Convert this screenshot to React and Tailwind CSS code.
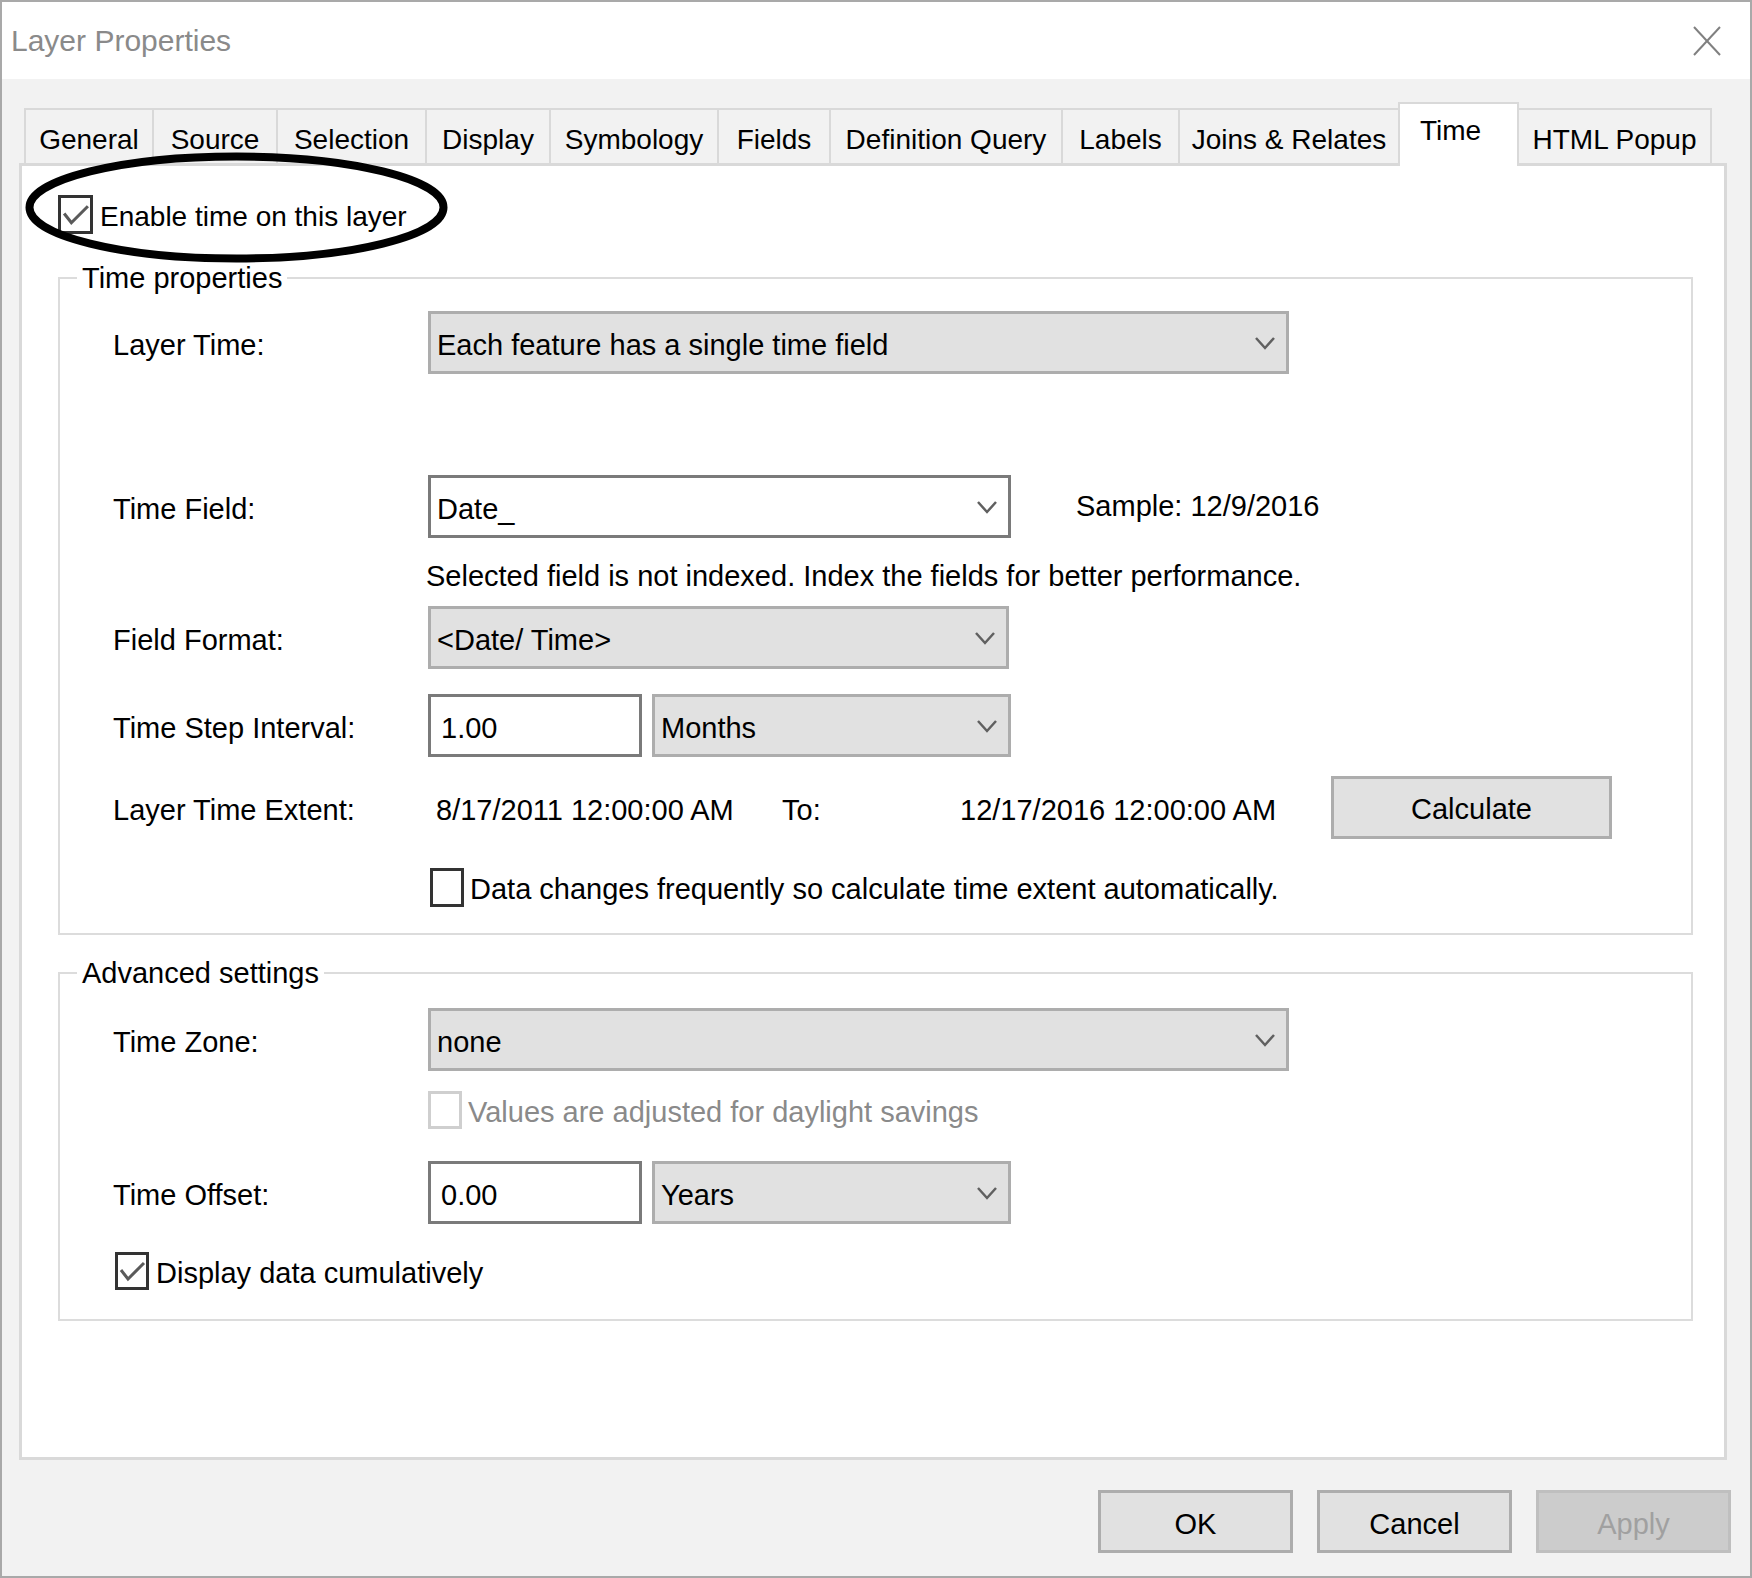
import React from 'react';

// Windows-style "Layer Properties" dialog, Time tab
const tabs = [
    { label: 'General', cls: 'w-[128px] h-[55px] border-t-2 border-l-2 bg-[#f2f2f2] pt-[16px]' },
    { label: 'Source', cls: 'w-[124px] h-[55px] border-t-2 border-l-2 bg-[#f2f2f2] pt-[16px]' },
    { label: 'Selection', cls: 'w-[149px] h-[55px] border-t-2 border-l-2 bg-[#f2f2f2] pt-[16px]' },
    { label: 'Display', cls: 'w-[124px] h-[55px] border-t-2 border-l-2 bg-[#f2f2f2] pt-[16px]' },
    { label: 'Symbology', cls: 'w-[168px] h-[55px] border-t-2 border-l-2 bg-[#f2f2f2] pt-[16px]' },
    { label: 'Fields', cls: 'w-[112px] h-[55px] border-t-2 border-l-2 bg-[#f2f2f2] pt-[16px]' },
    { label: 'Definition Query', cls: 'w-[232px] h-[55px] border-t-2 border-l-2 bg-[#f2f2f2] pt-[16px]' },
    { label: 'Labels', cls: 'w-[117px] h-[55px] border-t-2 border-l-2 bg-[#f2f2f2] pt-[16px]' },
    { label: 'Joins & Relates', cls: 'w-[220px] h-[55px] border-t-2 border-l-2 bg-[#f2f2f2] pt-[16px]' },
    { label: 'Time', cls: 'w-[121px] h-[64px] -mb-[3px] border-t-2 border-x-2 bg-white pt-[13px] pr-[16px] relative z-10' },
    { label: 'HTML Popup', cls: 'w-[193px] h-[55px] border-t-2 border-r-2 bg-[#f2f2f2] pt-[16px]' },
];

const Chevron = () => (
    <svg width="22" height="14" viewBox="0 0 22 14" className="shrink-0">
        <polyline points="2,2 11,12 20,2" fill="none" stroke="#606060" strokeWidth="2.5" />
    </svg>
);

const Dropdown = ({ value, width, editable }) => (
    <div
        className={`${width} h-[63px] border-[3px] flex items-center justify-between pl-[6px] pr-[10px] ${
            editable ? 'bg-white border-[#7a7a7a]' : 'bg-[#e1e1e1] border-[#adadad]'
        }`}
    >
        <span className="pt-[5px]">{value}</span>
        <Chevron />
    </div>
);

const TextBox = ({ value }) => (
    <div className="w-[214px] h-[63px] border-[3px] border-[#7a7a7a] bg-white flex items-center pl-[10px] pt-[5px]">
        {value}
    </div>
);

const Checkbox = ({ checked, disabled, size = 'w-[34px] h-[38px]' }) => (
    <div
        className={`${size} shrink-0 border-[3px] bg-white ${disabled ? 'border-[#cfcfcf]' : 'border-[#333333]'}`}
    >
        {checked && (
            <svg viewBox="0 0 28 32" className="w-full h-full">
                <polyline points="3,15 10,24 26,8" fill="none" stroke="#5a5a5a" strokeWidth="3" />
            </svg>
        )}
    </div>
);

const Label = ({ children }) => <div className="w-[315px] shrink-0 pt-[6px]">{children}</div>;

const Button = ({ children, disabled }) => (
    <div
        className={`w-[195px] h-[63px] border-[3px] flex items-center justify-center pt-[4px] ${
            disabled ? 'bg-[#cccccc] border-[#bfbfbf] text-[#a0a0a0]' : 'bg-[#e1e1e1] border-[#adadad]'
        }`}
    >
        {children}
    </div>
);

export default function App() {
    return (
        <div className="w-[1752px] h-[1578px] border-2 border-[#a9a9a9] bg-[#f2f2f2] font-['Liberation_Sans',Arial,sans-serif] text-[28px] leading-[28px] text-black overflow-hidden">
            {/* Title bar */}
            <div className="h-[77px] bg-white flex items-center justify-between pl-[9px] pr-[29px]">
                <span className="text-[30px] leading-[30px] text-[#8a8a8a]">Layer Properties</span>
                <svg width="28" height="30" viewBox="0 0 28 30">
                    <line x1="1" y1="1" x2="27" y2="29" stroke="#808080" strokeWidth="2" />
                    <line x1="27" y1="1" x2="1" y2="29" stroke="#808080" strokeWidth="2" />
                </svg>
            </div>

            {/* Tabs */}
            <div className="flex items-end mt-[23px] ml-[22px]">
                {tabs.map((t) => (
                    <div key={t.label} className={`${t.cls} border-[#d9d9d9] flex justify-center shrink-0 whitespace-nowrap`}>
                        {t.label}
                    </div>
                ))}
            </div>

            {/* Tab panel */}
            <div className="ml-[17px] w-[1708px] h-[1297px] bg-white border-[3px] border-[#d9d9d9] text-[29px] leading-[29px]">
                <div className="relative flex items-center ml-[36px] mt-[29px]">
                    <Checkbox checked size="w-[35px] h-[39px]" />
                    <span className="ml-[7px] pt-[4px] text-[28px]">Enable time on this layer</span>
                    <svg
                        width="423"
                        height="111"
                        viewBox="0 0 423 111"
                        className="absolute left-[-33px] top-[-43px] z-20 pointer-events-none"
                    >
                        <ellipse cx="211.5" cy="55.5" rx="207" ry="51" fill="none" stroke="#000" strokeWidth="8" />
                    </svg>
                </div>

                {/* Time properties */}
                <fieldset className="ml-[36px] mt-[30px] w-[1635px] border-2 border-[#dcdcdc] pb-[26px]">
                    <legend className="ml-[17px] px-[5px] leading-[28px]">Time properties</legend>
                    <div className="pl-[53px]">
                        <div className="flex items-center mt-[19px]">
                            <Label>Layer Time:</Label>
                            <Dropdown width="w-[861px]" value="Each feature has a single time field" />
                        </div>

                        <div className="flex items-center mt-[101px]">
                            <Label>Time Field:</Label>
                            <Dropdown width="w-[583px]" value="Date_" editable />
                            <span className="ml-[65px]">Sample: 12/9/2016</span>
                        </div>

                        <div className="ml-[313px] mt-[20px] pt-[4px]">
                            Selected field is not indexed. Index the fields for better performance.
                        </div>

                        <div className="flex items-center mt-[15px]">
                            <Label>Field Format:</Label>
                            <Dropdown width="w-[581px]" value="<Date/ Time>" />
                        </div>

                        <div className="flex items-center mt-[25px]">
                            <Label>Time Step Interval:</Label>
                            <TextBox value="1.00" />
                            <div className="ml-[10px]">
                                <Dropdown width="w-[359px]" value="Months" />
                            </div>
                        </div>

                        <div className="flex items-center mt-[19px]">
                            <Label>Layer Time Extent:</Label>
                            <span className="w-[354px] pl-[8px] shrink-0 pt-[6px]">8/17/2011 12:00:00 AM</span>
                            <span className="w-[178px] shrink-0 pt-[6px]">To:</span>
                            <span className="w-[371px] shrink-0 pt-[6px]">12/17/2016 12:00:00 AM</span>
                            <div className="w-[281px] h-[63px] border-[3px] border-[#adadad] bg-[#e1e1e1] flex items-center justify-center pt-[4px]">
                                Calculate
                            </div>
                        </div>

                        <div className="flex items-center mt-[29px] ml-[317px]">
                            <Checkbox size="w-[34px] h-[39px]" />
                            <span className="ml-[6px] pt-[4px]">Data changes frequently so calculate time extent automatically.</span>
                        </div>
                    </div>
                </fieldset>

                {/* Advanced settings */}
                <fieldset className="ml-[36px] mt-[24px] w-[1635px] border-2 border-[#dcdcdc] pb-[29px]">
                    <legend className="ml-[17px] px-[5px] leading-[28px]">Advanced settings</legend>
                    <div className="pl-[53px]">
                        <div className="flex items-center mt-[21px]">
                            <Label>Time Zone:</Label>
                            <Dropdown width="w-[861px]" value="none" />
                        </div>

                        <div className="flex items-center mt-[20px] ml-[315px]">
                            <Checkbox disabled />
                            <span className="ml-[6px] pt-[4px] text-[#8a8a8a]">Values are adjusted for daylight savings</span>
                        </div>

                        <div className="flex items-center mt-[32px]">
                            <Label>Time Offset:</Label>
                            <TextBox value="0.00" />
                            <div className="ml-[10px]">
                                <Dropdown width="w-[359px]" value="Years" />
                            </div>
                        </div>

                        <div className="flex items-center mt-[28px] ml-[2px]">
                            <Checkbox checked />
                            <span className="ml-[7px] pt-[4px]">Display data cumulatively</span>
                        </div>
                    </div>
                </fieldset>
            </div>

            {/* Dialog buttons */}
            <div className="flex justify-end gap-[24px] pr-[19px] mt-[30px] text-[29px]">
                <Button>OK</Button>
                <Button>Cancel</Button>
                <Button disabled>Apply</Button>
            </div>
        </div>
    );
}
